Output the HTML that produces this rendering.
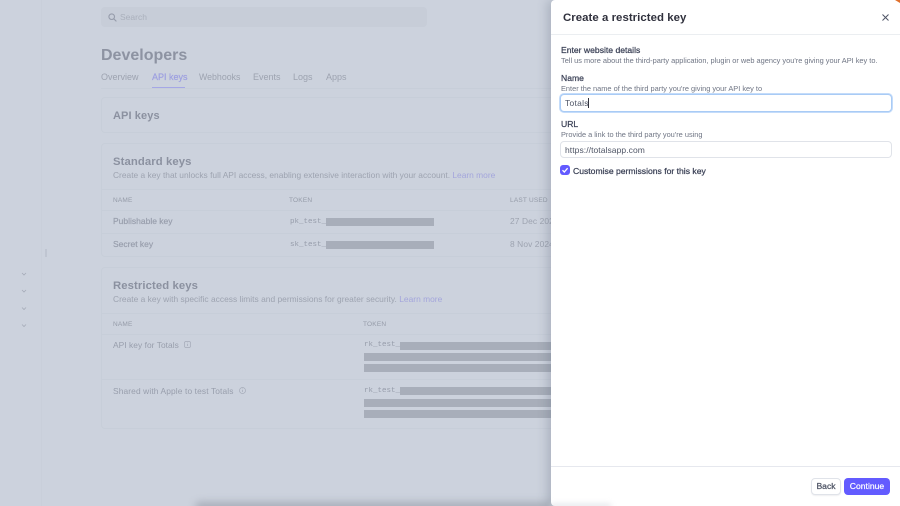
<!DOCTYPE html>
<html lang="en">
<head>
<meta charset="utf-8">
<title>Create a restricted key</title>
<style>
html,body{margin:0;padding:0;width:900px;height:506px;overflow:hidden;background:#ccd2dd;}
body{position:relative;font-family:"Liberation Sans",sans-serif;}
.t{position:absolute;white-space:nowrap;line-height:14px;height:14px;}
.b{position:absolute;}
#bg{position:absolute;left:0;top:0;width:900px;height:506px;overflow:hidden;}
#bg .t{filter:blur(.3px);}
.g{color:#9da3b0;}
.gd{color:#8b91a0;font-weight:bold;}
.link{color:#a3a5dc;}
.line{position:absolute;background:#c7ced9;height:1px;}
.red{position:absolute;background:#a8aeba;height:8px;}
.mono{font-family:"Liberation Mono",monospace;font-size:7.500px;color:#969caa;}
.hd{font-size:6.500px;color:#959ba8;letter-spacing:.2px;}
.sb{font-size:8.400px;color:#9da3b0;}
.md{font-size:8.500px;color:#989eac;-webkit-text-stroke:.2px #989eac;}
.card{position:absolute;border:1px solid #c7ced9;border-radius:4px;box-sizing:border-box;}
#panel{position:absolute;left:551px;top:0;width:349px;height:506px;background:#fff;border-radius:4px 0 0 4px;box-shadow:-4px 0 10px rgba(90,100,120,.28);}
#panel .t{color:#3c4257;filter:blur(.2px);}
.lbl{font-size:8.600px;-webkit-text-stroke:.25px #3c4257;}
.sub{font-size:7.400px;color:#6f7584 !important;}
.inp{position:absolute;left:9px;width:332px;box-sizing:border-box;border-radius:4px;background:#fff;}
</style>
</head>
<body>
<div id="bg">
  <div class="b" style="left:41px;top:0;width:1px;height:506px;background:#c9cfda"></div>
  <div class="b" style="left:101px;top:7px;width:326px;height:20px;border-radius:4px;background:#c7cdd8"></div>
  <svg class="b" style="left:108px;top:13px" width="9" height="9" viewBox="0 0 9 9" fill="none" stroke="#969cab" stroke-width="1.1"><circle cx="3.7" cy="3.7" r="2.8"/><path d="M5.8 5.8L8.4 8.4"/></svg>
  <div class="t" style="left:120px;top:10px;font-size:8.500px;color:#aab0bc">Search</div>
  <div class="t" style="left:101px;top:48px;font-size:16px;line-height:16px;height:16px;font-weight:bold;color:#8d93a2">Developers</div>
  <div class="t g" style="left:101px;top:70px;font-size:9px">Overview</div>
  <div class="t" style="left:152px;top:70px;font-size:9px;color:#9d9fe0;-webkit-text-stroke:.2px #9d9fe0">API keys</div>
  <div class="t g" style="left:199px;top:70px;font-size:8.800px">Webhooks</div>
  <div class="t g" style="left:253px;top:70px;font-size:9px">Events</div>
  <div class="t g" style="left:293px;top:70px;font-size:9px">Logs</div>
  <div class="t g" style="left:326px;top:70px;font-size:9px">Apps</div>
  <div class="line" style="left:101px;top:88px;width:450px"></div>
  <div class="b" style="left:152px;top:87px;width:33px;height:1px;background:#a5a7e6"></div>

  <div class="card" style="left:101px;top:97px;width:470px;height:36px"></div>
  <div class="t gd" style="left:113px;top:109px;font-size:11px;letter-spacing:.1px">API keys</div>

  <div class="card" style="left:101px;top:143px;width:470px;height:114px"></div>
  <div class="t gd" style="left:113px;top:155px;font-size:11.300px;letter-spacing:.1px">Standard keys</div>
  <div class="t sb" style="left:113px;top:168px;letter-spacing:.01px">Create a key that unlocks full API access, enabling extensive interaction with your account. <span class="link">Learn more</span></div>
  <div class="line" style="left:102px;top:189px;width:449px"></div>
  <div class="t hd" style="left:113px;top:194px">NAME</div>
  <div class="t hd" style="left:289px;top:194px">TOKEN</div>
  <div class="t hd" style="left:510px;top:194px">LAST USED</div>
  <div class="line" style="left:102px;top:210px;width:449px"></div>
  <div class="t md" style="left:113px;top:214px">Publishable key</div>
  <div class="t mono" style="left:290px;top:215px">pk_test_</div>
  <div class="red" style="left:326px;top:218px;width:108px"></div>
  <div class="t sb" style="left:510px;top:214px;letter-spacing:.1px">27 Dec 2024</div>
  <div class="line" style="left:102px;top:233px;width:449px"></div>
  <div class="t md" style="left:113px;top:237px">Secret key</div>
  <div class="t mono" style="left:290px;top:238px">sk_test_</div>
  <div class="red" style="left:326px;top:241px;width:108px"></div>
  <div class="t sb" style="left:510px;top:237px;letter-spacing:.1px">8 Nov 2024</div>

  <div class="card" style="left:101px;top:267px;width:470px;height:162px"></div>
  <div class="t gd" style="left:113px;top:279px;font-size:11.300px;letter-spacing:.1px">Restricted keys</div>
  <div class="t sb" style="left:113px;top:292px;letter-spacing:.025px">Create a key with specific access limits and permissions for greater security. <span class="link">Learn more</span></div>
  <div class="line" style="left:102px;top:313px;width:449px"></div>
  <div class="t hd" style="left:113px;top:318px">NAME</div>
  <div class="t hd" style="left:363px;top:318px">TOKEN</div>
  <div class="line" style="left:102px;top:334px;width:449px"></div>
  <div class="t sb" style="left:113px;top:338px;color:#989eac;letter-spacing:.05px">API key for Totals</div>
  <svg class="b" style="left:184px;top:341px" width="7" height="7" viewBox="0 0 7 7" fill="none" stroke="#a5abb8" stroke-width=".7"><rect x=".5" y=".5" width="6" height="6" rx="1.5"/><path d="M3.5 3v2M3.5 1.6v.6"/></svg>
  <div class="t mono" style="left:364px;top:338px">rk_test_</div>
  <div class="red" style="left:400px;top:342px;width:151px"></div>
  <div class="red" style="left:364px;top:353px;width:187px"></div>
  <div class="red" style="left:364px;top:364px;width:187px"></div>
  <div class="line" style="left:102px;top:379px;width:449px"></div>
  <div class="t sb" style="left:113px;top:384px;color:#989eac;letter-spacing:.12px">Shared with Apple to test Totals</div>
  <svg class="b" style="left:239px;top:387px" width="7" height="7" viewBox="0 0 7 7" fill="none" stroke="#a5abb8" stroke-width=".7"><circle cx="3.5" cy="3.500" r="3"/><path d="M3.5 3v2M3.5 1.6v.6"/></svg>
  <div class="t mono" style="left:364px;top:384px">rk_test_</div>
  <div class="red" style="left:400px;top:387px;width:151px"></div>
  <div class="red" style="left:364px;top:399px;width:187px"></div>
  <div class="red" style="left:364px;top:410px;width:187px"></div>

  <svg class="b" style="left:21px;top:271px" width="6" height="60" viewBox="0 0 6 60" fill="none" stroke="#a5abb8" stroke-width=".8"><path d="M1 2l2 2 2-2M1 19l2 2 2-2M1 36.500l2 2 2-2M1 53.500l2 2 2-2"/></svg>
  <div class="b" style="left:45px;top:249px;width:2px;height:8px;background:#bfc5d1"></div>
  <div class="b" style="left:195px;top:502px;width:420px;height:10px;background:#a8aeb9;filter:blur(4px);border-radius:6px"></div>
</div>

<div id="panel">
  <div class="t" style="left:12px;top:10px;font-size:11.400px;line-height:15px;height:15px;font-weight:bold;letter-spacing:.05px;color:#30313d;transform:translateY(1px)">Create a restricted key</div>
  <svg class="b" style="left:331px;top:14px" width="7" height="7" viewBox="0 0 7 7" fill="none" stroke="#4f5566" stroke-width="1"><path d="M.5.5l6 6M6.500.5l-6 6"/></svg>
  <div class="b" style="left:0;top:34px;width:349px;height:1px;background:#ebeef1"></div>

  <div class="t lbl" style="left:10px;top:43px">Enter website details</div>
  <div class="t sub" style="left:10px;top:54px">Tell us more about the third-party application, plugin or web agency you're giving your API key to.</div>
  <div class="t lbl" style="left:10px;top:71px">Name</div>
  <div class="t sub" style="left:10px;top:82px">Enter the name of the third party you're giving your API key to</div>
  <div class="inp" style="top:94px;height:18px;border:1px solid #a9cbf5;box-shadow:0 0 0 1px #c4dcfa"></div>
  <div class="t" style="left:14px;top:96px;font-size:8.500px;letter-spacing:.25px;color:#4f5566">Totals</div>
  <div class="b" style="left:37px;top:98px;width:1px;height:10px;background:#30313d"></div>

  <div class="t lbl" style="left:10px;top:117px">URL</div>
  <div class="t sub" style="left:10px;top:128px">Provide a link to the third party you're using</div>
  <div class="inp" style="top:141px;height:17px;border:1px solid #e0e3e9"></div>
  <div class="t" style="left:14px;top:143px;font-size:8.500px;letter-spacing:.07px;color:#4f5566">https://totalsapp.com</div>

  <div class="b" style="left:9px;top:165px;width:10px;height:10px;border-radius:3px;background:#635bff"></div>
  <svg class="b" style="left:9px;top:165px" width="10" height="10" viewBox="0 0 10 10" fill="none" stroke="#fff" stroke-width="1.3"><path d="M2.500 5.200l1.800 1.800 3.300-3.800"/></svg>
  <div class="t lbl" style="left:22px;top:164px">Customise permissions for this key</div>

  <div class="b" style="left:0;top:466px;width:349px;height:1px;background:#e6e8ee"></div>
  <div class="b" style="left:260px;top:478px;width:30px;height:17px;box-sizing:border-box;border:1px solid #e0e3e9;border-radius:4px;background:#fff;box-shadow:0 1px 1px rgba(60,66,87,.08);font-size:8.600px;line-height:15px;text-align:center;color:#4f5566;-webkit-text-stroke:.25px #4f5566">Back</div>
  <div class="b" style="left:293px;top:478px;width:46px;height:17px;border-radius:4px;background:#635bff;font-size:8.600px;line-height:17px;text-align:center;color:#fff;-webkit-text-stroke:.2px #fff">Continue</div>
  <div class="b" style="left:0;top:504px;width:60px;height:4px;background:#dfe1e6;filter:blur(3px)"></div>
</div>
<div class="b" style="left:895px;top:0;width:5px;height:3px;background:#e0702c;clip-path:polygon(0 0,100% 0,100% 100%)"></div>
</body>
</html>
